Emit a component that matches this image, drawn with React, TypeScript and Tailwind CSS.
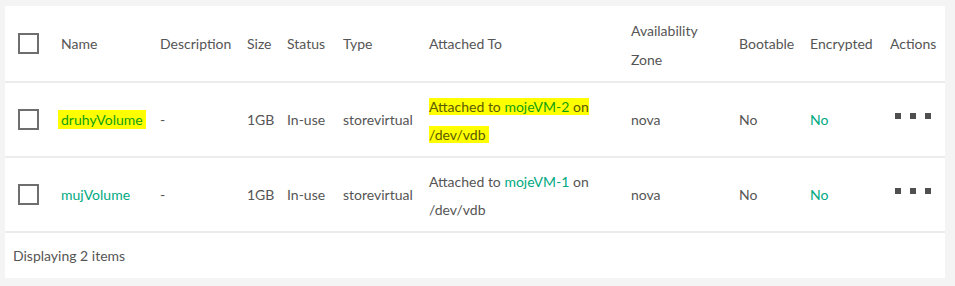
import React from 'react'

const cols =
  'grid grid-cols-[43px_99px_87px_40px_56px_86px_202px_108px_71px_80px_55px] items-center pl-[13px]'

type Volume = {
  name: string
  vm: string
  marked?: boolean
}

const volumes: Volume[] = [
  { name: 'druhyVolume', vm: 'mojeVM-2', marked: true },
  { name: 'mujVolume', vm: 'mojeVM-1' },
]

function Checkbox() {
  return <div className="h-[21px] w-[21px] border-2 border-[#6e6e6e] bg-white" />
}

function Dots() {
  return (
    <div className="mb-[7px] ml-[5px] flex gap-[9px]">
      <span className="h-[6px] w-[6px] bg-[#4f4f4f]" />
      <span className="h-[6px] w-[6px] bg-[#4f4f4f]" />
      <span className="h-[6px] w-[6px] bg-[#4f4f4f]" />
    </div>
  )
}

function Row({ v }: { v: Volume }) {
  // highlighted row looks like a marker pen pass over the text
  const mark = v.marked ? 'bg-[#ffff00] text-[#5a5a00]' : ''
  const link = v.marked ? 'text-[#12a012]' : 'text-[#01a982]'

  return (
    <div className={`${cols} h-[75px] border-b-2 border-[#ececec]`}>
      <Checkbox />
      <div>
        <span className={v.marked ? `-ml-[3px] bg-[#ffff00] px-[3px] py-[1px] ${link}` : link}>
          {v.name}
        </span>
      </div>
      <div>-</div>
      <div>1GB</div>
      <div>In-use</div>
      <div>storevirtual</div>
      <div className="mt-[3px] leading-[28px]">
        <span className={mark}>
          Attached to <span className={link}>{v.vm}</span> on{' '}
        </span>
        <br />
        <span className={mark}>/dev/vdb&nbsp;</span>
      </div>
      <div>nova</div>
      <div>No</div>
      <div className="text-[#01a982]">No</div>
      <Dots />
    </div>
  )
}

export default function App() {
  return (
    <div
      className="min-h-screen bg-[#f4f4f4] pt-[6px] pl-[5px] text-[14px] text-[#555555]"
      style={{ fontFamily: 'Lato, "Open Sans", sans-serif' }}
    >
      <div className="w-[940px] bg-white">
        <div className={`${cols} h-[77px] border-b-2 border-[#ececec]`}>
          <Checkbox />
          <div>Name</div>
          <div>Description</div>
          <div>Size</div>
          <div>Status</div>
          <div>Type</div>
          <div>Attached To</div>
          <div className="mt-[2px] leading-[29px]">
            Availability
            <br />
            Zone
          </div>
          <div>Bootable</div>
          <div>Encrypted</div>
          <div>Actions</div>
        </div>
        {volumes.map((v) => (
          <Row key={v.name} v={v} />
        ))}
        <div className="flex h-[45px] items-center pl-[8px]">Displaying 2 items</div>
      </div>
    </div>
  )
}
